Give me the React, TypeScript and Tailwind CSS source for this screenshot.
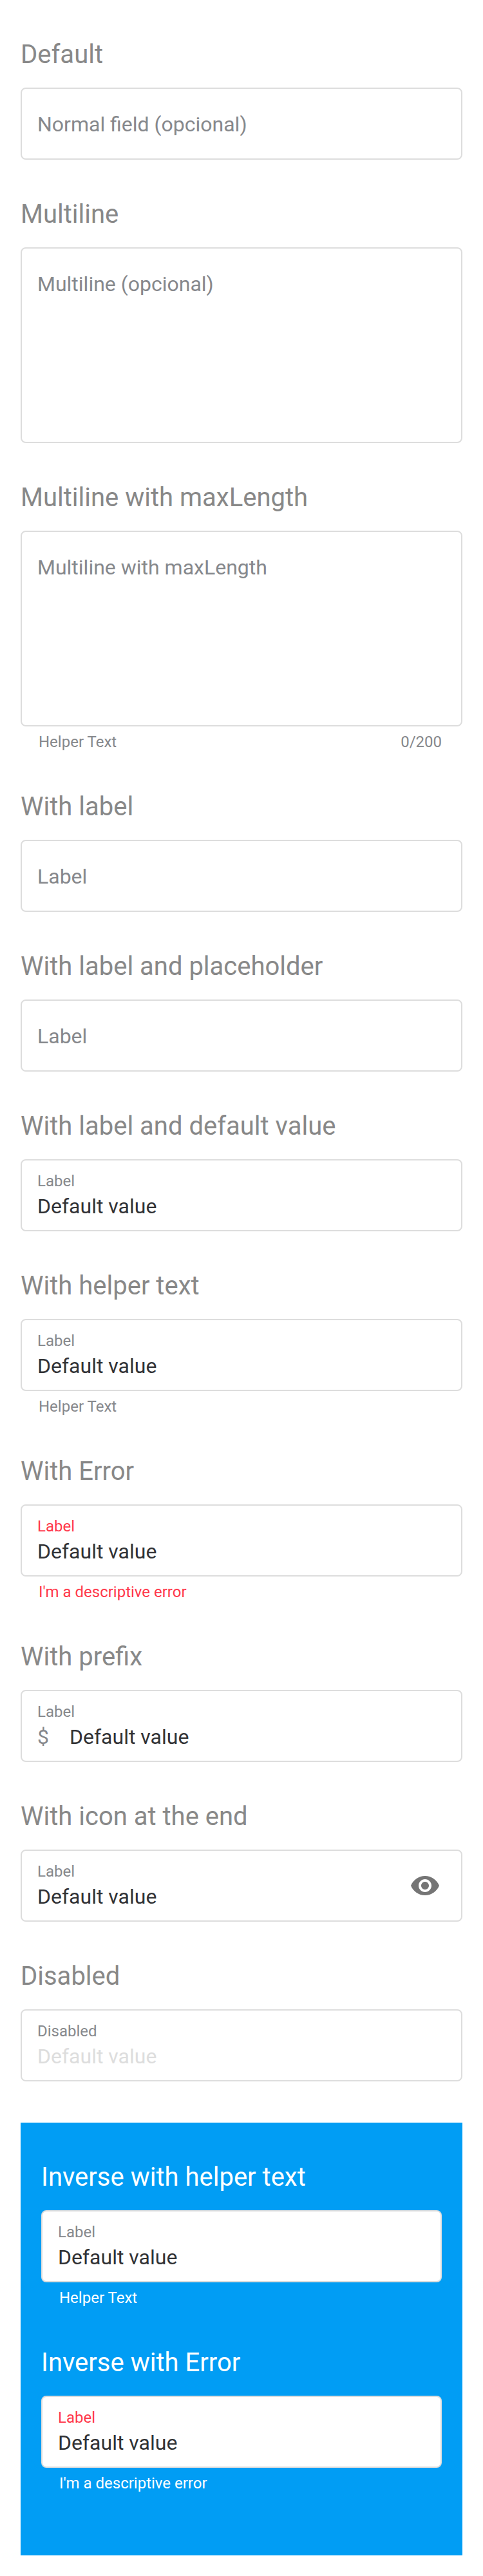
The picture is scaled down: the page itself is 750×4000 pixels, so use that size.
import React from "react";

type FieldProps = {
  title: string;
  label: string;
  value?: string;
  helper?: string;
  counter?: string;
  prefix?: string;
  multiline?: boolean;
  error?: boolean;
  disabled?: boolean;
  inverse?: boolean;
  endIcon?: React.ReactNode;
};

function EyeIcon() {
  return (
    <svg width="48" height="48" viewBox="0 0 24 24" fill="#757575" aria-hidden="true">
      <path d="M12 4.5C7 4.5 2.73 7.61 1 12c1.73 4.39 6 7.5 11 7.5s9.27-3.11 11-7.5c-1.73-4.39-6-7.5-11-7.5zM12 17c-2.76 0-5-2.24-5-5s2.24-5 5-5 5 2.24 5 5-2.24 5-5 5zm0-8c-1.66 0-3 1.34-3 3s1.34 3 3 3 3-1.34 3-3-1.34-3-3-3z" />
    </svg>
  );
}

function Field(props: FieldProps) {
  const { title, label, value, helper, counter, prefix, multiline, error, disabled, inverse, endIcon } = props;
  const labelColor = error ? "text-[#ff374a]" : "text-[#86888c]";
  const helperColor = inverse ? "text-white" : labelColor;
  return (
    <section className="mb-16">
      <h2 className={`h-[72px] text-[40px] leading-[41px] ${inverse ? "text-white" : "text-[#888888]"}`}>{title}</h2>
      <div
        className={`flex justify-between rounded-lg border-2 border-[#dddddd] bg-white pl-6 pr-8 ${
          multiline ? "h-[304px]" : "h-[112px]"
        }`}
      >
        {value ? (
          <div className="pt-4">
            <div className={`h-[31px] text-2xl leading-8 ${labelColor}`}>{label}</div>
            <div className="flex h-12 items-center gap-8 text-[32px] leading-[48px]">
              {prefix && <span className="text-[#86888c]">{prefix}</span>}
              <span className={disabled ? "text-[#dddddd]" : "text-[#313235]"}>{value}</span>
            </div>
          </div>
        ) : (
          <div className="pt-[31px] text-[32px] leading-[48px] text-[#86888c]">{label}</div>
        )}
        {endIcon && <div className="flex items-center">{endIcon}</div>}
      </div>
      {helper && (
        <div className={`flex h-10 justify-between pl-7 pr-8 pt-2 text-2xl leading-8 ${helperColor}`}>
          <span>{helper}</span>
          {counter && <span>{counter}</span>}
        </div>
      )}
    </section>
  );
}

export default function App() {
  return (
    <main className="h-[4000px] w-[750px] bg-white px-8 pt-16 font-['Roboto',sans-serif] antialiased">
      <Field title="Default" label="Normal field (opcional)" />
      <Field title="Multiline" label="Multiline (opcional)" multiline />
      <Field
        title="Multiline with maxLength"
        label="Multiline with maxLength"
        multiline
        helper="Helper Text"
        counter="0/200"
      />
      <Field title="With label" label="Label" />
      <Field title="With label and placeholder" label="Label" />
      <Field title="With label and default value" label="Label" value="Default value" />
      <Field title="With helper text" label="Label" value="Default value" helper="Helper Text" />
      <Field title="With Error" label="Label" value="Default value" helper="I'm a descriptive error" error />
      <Field title="With prefix" label="Label" value="Default value" prefix="$" />
      <Field title="With icon at the end" label="Label" value="Default value" endIcon={<EyeIcon />} />
      <Field title="Disabled" label="Disabled" value="Default value" disabled />
      <div className="flow-root bg-[#019df4] px-8 pb-8 pt-16">
        <Field inverse title="Inverse with helper text" label="Label" value="Default value" helper="Helper Text" />
        <Field
          inverse
          title="Inverse with Error"
          label="Label"
          value="Default value"
          helper="I'm a descriptive error"
          error
        />
      </div>
    </main>
  );
}
